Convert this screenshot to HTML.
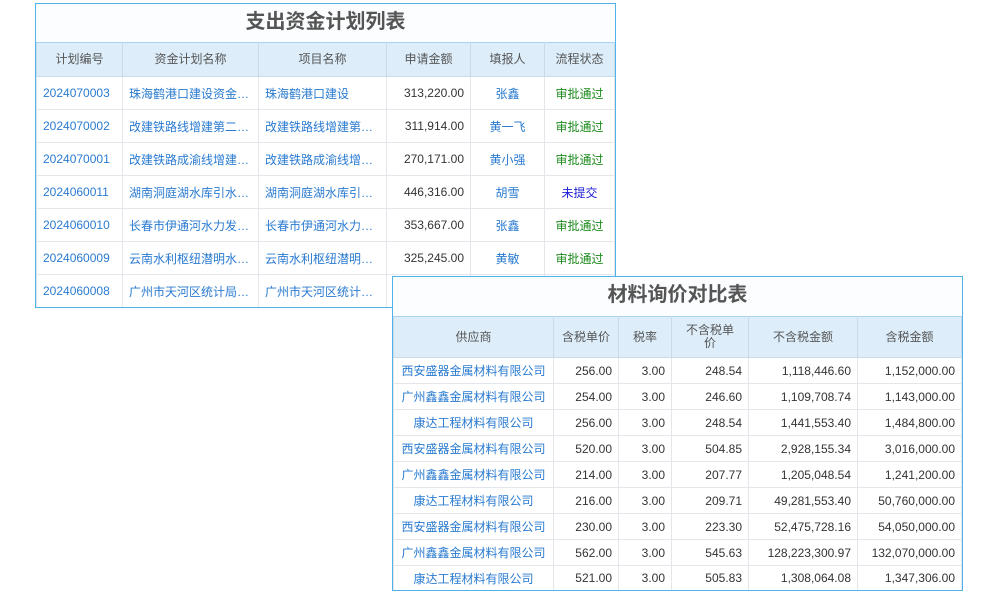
<!DOCTYPE html>
<html><head><meta charset="utf-8"><style>
body{margin:0;width:1000px;height:600px;background:#fff;position:relative;overflow:hidden;font-family:"Liberation Sans","Noto Sans CJK SC",sans-serif;font-size:12px;}
.box{position:absolute;background:#fff;border:1px solid #4fb3ea;box-sizing:border-box;overflow:hidden;}
.title{font-size:20px;font-weight:bold;color:#555;text-align:center;background:#fbfdfe;}
table{border-collapse:collapse;table-layout:fixed;width:100%;}
td{border:1px solid #e3e6ea;padding:0 6px;white-space:nowrap;overflow:hidden;text-overflow:ellipsis;color:#333;}
th{background:#ddeefa;border:1px solid #c9dbe8;font-weight:normal;color:#555;padding:0 4px;line-height:13px;}
tr:first-child th{border-top:1px solid #a9d3f0}
.l{color:#2a7bd0}.c{text-align:center}.r{text-align:right}
.s{padding:0 2px;text-overflow:clip}
.g{color:#1b8a1b;text-align:center}.b{color:#1c1cd6;text-align:center}
</style></head><body>
<div class="box" style="left:35px;top:3px;width:581px;height:305px;">
<div class="title" style="height:38px;line-height:36px;">支出资金计划列表</div>
<table>
<colgroup><col style="width:86px"><col style="width:136px"><col style="width:128px"><col style="width:84px"><col style="width:74px"><col></colgroup>
<tr style="height:34px"><th>计划编号</th><th>资金计划名称</th><th>项目名称</th><th>申请金额</th><th>填报人</th><th>流程状态</th></tr>
<tr style="height:33px"><td class="l">2024070003</td><td class="l">珠海鹤港口建设资金计划</td><td class="l">珠海鹤港口建设</td><td class="r">313,220.00</td><td class="l c">张鑫</td><td class="g">审批通过</td></tr>
<tr style="height:33px"><td class="l">2024070002</td><td class="l">改建铁路线增建第二线计划</td><td class="l">改建铁路线增建第二线</td><td class="r">311,914.00</td><td class="l c">黄一飞</td><td class="g">审批通过</td></tr>
<tr style="height:33px"><td class="l">2024070001</td><td class="l">改建铁路成渝线增建计划</td><td class="l">改建铁路成渝线增建计划</td><td class="r">270,171.00</td><td class="l c">黄小强</td><td class="g">审批通过</td></tr>
<tr style="height:33px"><td class="l">2024060011</td><td class="l">湖南洞庭湖水库引水工程</td><td class="l">湖南洞庭湖水库引水工程</td><td class="r">446,316.00</td><td class="l c">胡雪</td><td class="b">未提交</td></tr>
<tr style="height:33px"><td class="l">2024060010</td><td class="l">长春市伊通河水力发电计划</td><td class="l">长春市伊通河水力发电</td><td class="r">353,667.00</td><td class="l c">张鑫</td><td class="g">审批通过</td></tr>
<tr style="height:33px"><td class="l">2024060009</td><td class="l">云南水利枢纽潜明水库计划</td><td class="l">云南水利枢纽潜明水库</td><td class="r">325,245.00</td><td class="l c">黄敏</td><td class="g">审批通过</td></tr>
<tr style="height:33px"><td class="l">2024060008</td><td class="l">广州市天河区统计局计划</td><td class="l">广州市天河区统计局计划</td><td class="r"></td><td></td><td></td></tr>
</table></div>
<div class="box" style="left:392px;top:276px;width:571px;height:315px;">
<div class="title" style="height:39px;line-height:37px;">材料询价对比表</div>
<table>
<colgroup><col style="width:160px"><col style="width:65px"><col style="width:53px"><col style="width:77px"><col style="width:109px"><col></colgroup>
<tr style="height:41px"><th>供应商</th><th>含税单价</th><th>税率</th><th>不含税单<br>价</th><th>不含税金额</th><th>含税金额</th></tr>
<tr style="height:26px"><td class="l c s">西安盛器金属材料有限公司</td><td class="r">256.00</td><td class="r">3.00</td><td class="r">248.54</td><td class="r">1,118,446.60</td><td class="r">1,152,000.00</td></tr>
<tr style="height:26px"><td class="l c s">广州鑫鑫金属材料有限公司</td><td class="r">254.00</td><td class="r">3.00</td><td class="r">246.60</td><td class="r">1,109,708.74</td><td class="r">1,143,000.00</td></tr>
<tr style="height:26px"><td class="l c s">康达工程材料有限公司</td><td class="r">256.00</td><td class="r">3.00</td><td class="r">248.54</td><td class="r">1,441,553.40</td><td class="r">1,484,800.00</td></tr>
<tr style="height:26px"><td class="l c s">西安盛器金属材料有限公司</td><td class="r">520.00</td><td class="r">3.00</td><td class="r">504.85</td><td class="r">2,928,155.34</td><td class="r">3,016,000.00</td></tr>
<tr style="height:26px"><td class="l c s">广州鑫鑫金属材料有限公司</td><td class="r">214.00</td><td class="r">3.00</td><td class="r">207.77</td><td class="r">1,205,048.54</td><td class="r">1,241,200.00</td></tr>
<tr style="height:26px"><td class="l c s">康达工程材料有限公司</td><td class="r">216.00</td><td class="r">3.00</td><td class="r">209.71</td><td class="r">49,281,553.40</td><td class="r">50,760,000.00</td></tr>
<tr style="height:26px"><td class="l c s">西安盛器金属材料有限公司</td><td class="r">230.00</td><td class="r">3.00</td><td class="r">223.30</td><td class="r">52,475,728.16</td><td class="r">54,050,000.00</td></tr>
<tr style="height:26px"><td class="l c s">广州鑫鑫金属材料有限公司</td><td class="r">562.00</td><td class="r">3.00</td><td class="r">545.63</td><td class="r">128,223,300.97</td><td class="r">132,070,000.00</td></tr>
<tr style="height:25px"><td class="l c s">康达工程材料有限公司</td><td class="r">521.00</td><td class="r">3.00</td><td class="r">505.83</td><td class="r">1,308,064.08</td><td class="r">1,347,306.00</td></tr>
</table></div>
</body></html>
